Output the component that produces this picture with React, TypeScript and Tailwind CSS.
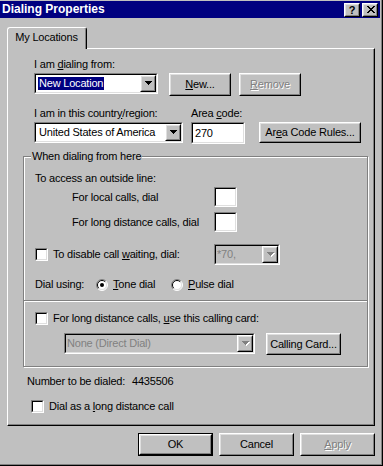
import React from 'react'

type BoxProps = { className?: string; inner?: string; children?: React.ReactNode }

/* 3d edges */
const Raised: React.FC<BoxProps> = ({ className = '', inner = '', children }) => (
  <div className={`bg-[#c0c0c0] border border-t-white border-l-white border-r-black border-b-black ${className}`}>
    <div className={`w-full h-full border border-t-[#dfdfdf] border-l-[#dfdfdf] border-r-[#808080] border-b-[#808080] flex items-center justify-center ${inner}`}>
      {children}
    </div>
  </div>
)

const Sunken: React.FC<BoxProps> = ({ className = '', inner = '', children }) => (
  <div className={`border border-t-[#808080] border-l-[#808080] border-r-white border-b-white ${className}`}>
    <div className={`w-full h-full border border-t-black border-l-black border-r-[#dfdfdf] border-b-[#dfdfdf] ${inner}`}>
      {children}
    </div>
  </div>
)

const Arrow: React.FC<{ disabled?: boolean }> = ({ disabled }) => (
  <svg width="8" height="5" viewBox="0 0 8 5" shapeRendering="crispEdges">
    {disabled && (
      <g fill="#fff">
        <rect x="1" y="1" width="7" height="1" />
        <rect x="2" y="2" width="5" height="1" />
        <rect x="3" y="3" width="3" height="1" />
        <rect x="4" y="4" width="1" height="1" />
      </g>
    )}
    <g fill={disabled ? '#808080' : '#000'}>
      <rect x="0" y="0" width="7" height="1" />
      <rect x="1" y="1" width="5" height="1" />
      <rect x="2" y="2" width="3" height="1" />
      <rect x="3" y="3" width="1" height="1" />
    </g>
  </svg>
)

const Combo: React.FC<BoxProps & { disabled?: boolean }> = ({ className = '', disabled, children }) => (
  <Sunken className={className} inner={`flex ${disabled ? 'bg-[#c0c0c0] text-[#808080]' : 'bg-white'}`}>
    <div className="flex-1 min-w-0 flex items-center pl-[1px] whitespace-nowrap overflow-hidden">{children}</div>
    <Raised className="w-[16px] h-full shrink-0" inner="pl-px">
      <Arrow disabled={disabled} />
    </Raised>
  </Sunken>
)

const Check = () => <Sunken className="w-[13px] h-[13px] shrink-0" inner="bg-white" />

const Radio: React.FC<{ checked?: boolean }> = ({ checked }) => (
  <svg width="12" height="12" viewBox="0 0 12 12" className="shrink-0">
    <circle cx="6" cy="6" r="5" fill="#fff" />
    <path d="M2.1 9.9A5.5 5.5 0 0 1 9.9 2.1" fill="none" stroke="#808080" />
    <path d="M9.9 2.1A5.5 5.5 0 0 1 2.1 9.9" fill="none" stroke="#fff" />
    <path d="M2.8 9.2A4.5 4.5 0 0 1 9.2 2.8" fill="none" stroke="#000" />
    <path d="M9.2 2.8A4.5 4.5 0 0 1 2.8 9.2" fill="none" stroke="#dfdfdf" />
    {checked && <circle cx="6" cy="6" r="2" fill="#000" />}
  </svg>
)

const Off: React.FC<{ children: React.ReactNode }> = ({ children }) => (
  <span className="text-[#808080] [text-shadow:1px_1px_0_#fff]">{children}</span>
)

const CloseGlyph = () => (
  <svg width="8" height="7" viewBox="0 0 8 7" shapeRendering="crispEdges" fill="#000">
    <rect x="0" y="0" width="2" height="1" />
    <rect x="6" y="0" width="2" height="1" />
    <rect x="1" y="1" width="2" height="1" />
    <rect x="5" y="1" width="2" height="1" />
    <rect x="2" y="2" width="4" height="1" />
    <rect x="3" y="3" width="2" height="1" />
    <rect x="2" y="4" width="4" height="1" />
    <rect x="1" y="5" width="2" height="1" />
    <rect x="5" y="5" width="2" height="1" />
    <rect x="0" y="6" width="2" height="1" />
    <rect x="6" y="6" width="2" height="1" />
  </svg>
)

const TitleBar = () => (
  <div className="h-[17px] bg-[#000080] flex items-center justify-between pl-[2px] pr-[2px]">
    <span className="text-white font-bold text-[12px] tracking-normal">Dialing Properties</span>
    <div className="flex gap-[2px]">
      <Raised className="w-[16px] h-[14px]" inner="text-black font-bold text-[11px] leading-none pt-px">?</Raised>
      <Raised className="w-[16px] h-[14px]" inner="pl-px">
        <CloseGlyph />
      </Raised>
    </div>
  </div>
)

const GroupBox = () => (
  <div className="relative ml-[15px] w-[345px] h-[211px] border border-[#808080] shadow-[inset_1px_1px_0_#fff,1px_1px_0_#fff]">
    <span className="absolute left-[7px] top-[-7px] px-[1px] bg-[#c0c0c0]">When dialing from here</span>
    <div className="pt-[15px]">
      <div className="pl-[11px] h-[13px]">To access an outside line:</div>
      <div className="mt-[2px] flex items-center h-[20px] pl-[48px]">
        <span className="w-[142px]">For local calls, dial</span>
        <Sunken className="w-[23px] h-[20px]" inner="bg-white" />
      </div>
      <div className="mt-[5px] flex items-center h-[20px] pl-[48px]">
        <span className="w-[142px]">For long distance calls, dial</span>
        <Sunken className="w-[23px] h-[20px]" inner="bg-white" />
      </div>
      <div className="mt-[12px] flex items-center h-[21px] pl-[11px]">
        <Check />
        <span className="ml-[5px] w-[161px]">
          To disable call <u>w</u>aiting, dial:
        </span>
        <Combo className="w-[66px] h-[21px]" disabled>
          *70,
        </Combo>
      </div>
      <div className="mt-[13px] flex items-center h-[13px] pl-[11px]">
        <span className="w-[61px]">Dial using:</span>
        <Radio checked />
        <span className="ml-[5px] w-[58px]">
          <u>T</u>one dial
        </span>
        <Radio />
        <span className="ml-[5px]">
          <u>P</u>ulse dial
        </span>
      </div>
      <div className="mt-[9px] h-[2px] border-t border-[#808080] border-b border-b-white" />
      <div className="mt-[10px] flex items-center h-[13px] pl-[11px]">
        <Check />
        <span className="ml-[5px]">
          For long distance calls, <u>u</u>se this calling card:
        </span>
      </div>
      <div className="mt-[8px] flex items-start pl-[40px]">
        <Combo className="w-[191px] h-[21px]" disabled>
          None (Direct Dial)
        </Combo>
        <Raised className="ml-[11px] w-[75px] h-[22px]">Calling Card...</Raised>
      </div>
    </div>
  </div>
)

const Panel = () => (
  <div className="w-[368px] h-[378px] border-l border-t border-white border-r border-b border-r-black border-b-black">
    <div className="h-full border-r border-b border-[#808080] pt-[9px]">
      <div className="pl-[26px] h-[13px]">
        I am <u>d</u>ialing from:
      </div>
      <div className="mt-[2px] flex items-start pl-[26px]">
        <Combo className="w-[124px] h-[21px]">
          <span className="bg-[#000080] text-white px-[1px] ml-px">New Location</span>
        </Combo>
        <Raised className="ml-[11px] w-[62px] h-[23px]">
          <span>
            <u>N</u>ew...
          </span>
        </Raised>
        <Raised className="ml-[8px] w-[62px] h-[23px]">
          <Off>
            <u>R</u>emove
          </Off>
        </Raised>
      </div>
      <div className="mt-[11px] flex pl-[26px] h-[13px]">
        <span className="w-[157px]">
          I am in this countr<u>y</u>/region:
        </span>
        <span>
          Area <u>c</u>ode:
        </span>
      </div>
      <div className="mt-[2px] flex items-start pl-[26px]">
        <Combo className="w-[149px] h-[21px]">
          <span className="pl-[2px]">United States of America</span>
        </Combo>
        <Sunken className="ml-[8px] w-[54px] h-[22px]" inner="bg-white flex items-center pl-[2px]">
          270
        </Sunken>
        <Raised className="ml-[14px] w-[102px] h-[21px]">
          <span>
            Ar<u>e</u>a Code Rules...
          </span>
        </Raised>
      </div>
      <div className="mt-[12px]">
        <GroupBox />
      </div>
      <div className="mt-[8px] flex pl-[19px] h-[13px]">
        <span className="w-[105px]">Number to be dialed:</span>
        <span>4435506</span>
      </div>
      <div className="mt-[12px] flex items-center pl-[23px] h-[13px]">
        <Check />
        <span className="ml-[5px]">
          Dial as a <u>l</u>ong distance call
        </span>
      </div>
    </div>
  </div>
)

export default function App() {
  return (
    <div className="w-[383px] h-[466px] bg-[#c0c0c0] text-black text-[11px] leading-[13px] tracking-[-0.2px] font-['Liberation_Sans',Arial,sans-serif] select-none">
      <div className="h-full border-r border-b border-black">
        <div className="h-full border-r border-b border-[#808080] pt-px pr-px">
          <TitleBar />
          <div className="pl-[7px] pt-[9px]">
            {/* tab */}
            <div className="relative z-10 -mb-px w-[80px] h-[22px] bg-[#c0c0c0] border-l border-t border-white border-r border-r-black rounded-t-[3px]">
              <div className="h-full border-r border-[#808080] rounded-tr-[2px] flex justify-center pt-[3px]">My Locations</div>
            </div>
            <Panel />
            <div className="w-[368px] flex justify-end gap-[6px] pt-[7px]">
              <div className="w-[75px] h-[23px] border border-black">
                <Raised className="w-full h-full">OK</Raised>
              </div>
              <Raised className="w-[75px] h-[23px]">Cancel</Raised>
              <Raised className="w-[75px] h-[23px]">
                <Off>
                  <u>A</u>pply
                </Off>
              </Raised>
            </div>
          </div>
        </div>
      </div>
    </div>
  )
}
